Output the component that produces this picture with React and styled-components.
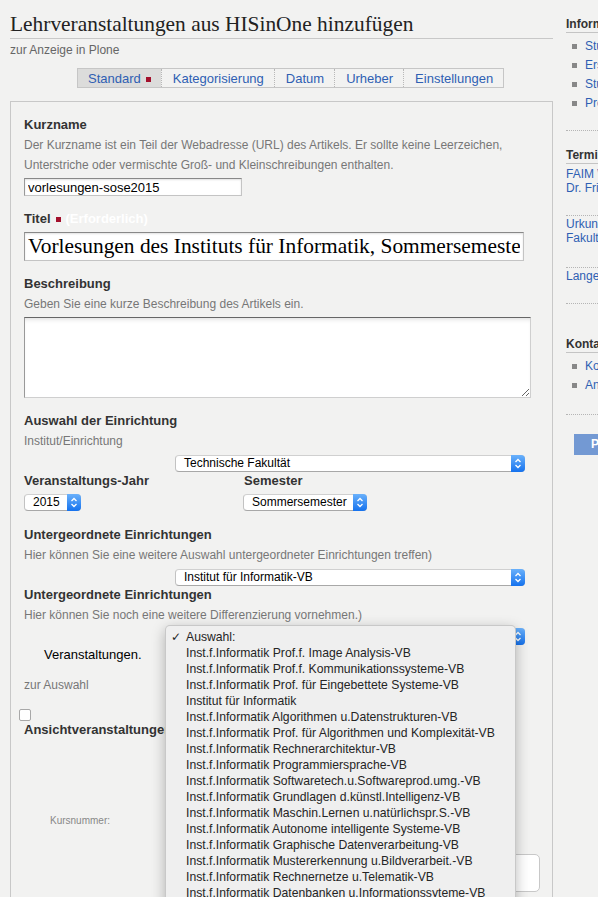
import React from 'react';
import styled, { createGlobalStyle } from 'styled-components';

const GlobalStyle = createGlobalStyle`
  html, body {
    margin: 0;
    padding: 0;
    background: #f2f2f1;
    overflow: hidden;
    font-family: "Liberation Sans", Arial, sans-serif;
  }
`;

const Page = styled.div`
  display: flex;
  align-items: flex-start;
  width: 820px;
  padding-left: 10px;
`;

const Main = styled.div`
  width: 543px;
  flex: none;
`;

const Title = styled.h1`
  margin: 0;
  padding: 11px 0 1px;
  font-family: "Liberation Serif", "Times New Roman", serif;
  font-weight: normal;
  font-size: 21.4px;
  line-height: 26px;
  color: #222;
  border-bottom: 1px solid #c8c8c8;
`;

const Subtitle = styled.div`
  margin-top: 3px;
  font-size: 12px;
  line-height: 16px;
  color: #666;
`;

const Tabs = styled.div`
  display: flex;
  margin: 10px 0 0 67px;
  width: fit-content;
  border: 1px solid #c6c6c6;
  background: #f2f2f1;
`;

const Tab = styled.div`
  display: flex;
  align-items: center;
  padding: 1px 10px 0 ${p => (p.$first ? '10px' : '11px')};
  font-size: 13px;
  line-height: 17px;
  color: #2f5fb3;
  background: ${p => (p.$active ? '#dcdcdb' : 'transparent')};
  border-left: ${p => (p.$first ? 'none' : '1px dotted #b8b8b8')};
`;

const Required = styled.span`
  display: inline-block;
  width: 5px;
  height: 5px;
  margin-left: 5px;
  background: #a3102c;
  position: relative;
  top: ${p => p.$top || '1px'};
`;

const Fieldset = styled.div`
  margin-top: 13px;
  border: 1px solid #c8c8c8;
  border-bottom: none;
  padding: 14px 20px 0 13px;
  height: 820px;
`;

const Field = styled.div`
  margin-top: ${p => p.$mt || '14px'};
`;

const Label = styled.div`
  font-size: 13px;
  line-height: 18px;
  font-weight: bold;
  color: #333;
  white-space: nowrap;
`;

const Muted = styled.span`
  color: #fff;
  font-weight: bold;
  margin-left: 5px;
`;

const Help = styled.div`
  margin-top: 1px;
  font-size: 12px;
  line-height: 20px;
  color: #777;
  white-space: nowrap;
`;

const TextInput = styled.input`
  display: block;
  box-sizing: border-box;
  margin-top: ${p => p.$mt || '3px'};
  width: ${p => p.$w};
  height: ${p => p.$h};
  padding: 0 3px;
  border: 1px solid #c4c4c4;
  border-top-color: #888;
  border-left-color: #999;
  background: #fff;
  box-shadow: inset 0 1px 2px rgba(0, 0, 0, 0.12);
  font-family: ${p => (p.$serif ? '"Liberation Serif", "Times New Roman", serif' : '"Liberation Sans", Arial, sans-serif')};
  font-size: ${p => p.$fs};
  color: #000;
  outline: none;
`;

const TextArea = styled.textarea`
  display: block;
  box-sizing: border-box;
  margin-top: 3px;
  width: 507px;
  height: 81px;
  border: 1px solid #cfcfcf;
  border-top-color: #666;
  border-left-color: #999;
  background: #fff;
  box-shadow: inset 0 4px 5px -3px rgba(0, 0, 0, 0.15);
  outline: none;
`;

const SelectBox = styled.div`
  position: relative;
  display: flex;
  box-sizing: border-box;
  margin-top: ${p => p.$mt || '3px'};
  margin-left: ${p => p.$ml || '0'};
  width: ${p => p.$w};
  height: 17px;
  border: 1px solid #c2c2c2;
  border-top-color: #d0d0d0;
  border-bottom-color: #a8a8a8;
  border-radius: 4px;
  background: #fff;
`;

const SelectText = styled.div`
  flex: 1;
  padding-left: 8px;
  font-size: 12px;
  line-height: 15px;
  color: #000;
  white-space: nowrap;
  overflow: hidden;
`;

const SelectArrow = styled.div`
  display: flex;
  align-items: center;
  justify-content: center;
  width: 14px;
  margin: -1px -1px -1px 0;
  border-radius: 0 4px 4px 0;
  background: linear-gradient(#6ab1fb, #1572ee);
`;

const Row = styled.div`
  display: grid;
  grid-template-columns: 220px 1fr;
`;

const Plain = styled.div`
  margin: 2px 0 0 20px;
  font-size: 13px;
  line-height: 16px;
  color: #000;
`;

const Note = styled.div`
  margin-top: 14px;
  font-size: 12px;
  line-height: 16px;
  color: #777;
`;

const Check = styled.div`
  margin: 16px 0 0 -5px;
  width: 12px;
  height: 12px;
  box-sizing: border-box;
  border: 1px solid #a8a8a8;
  border-radius: 2px;
  background: #fff;
`;

const Small = styled.div`
  margin: 76px 0 0 26px;
  font-size: 10px;
  line-height: 12px;
  color: #888;
`;

const CourseBox = styled.div`
  margin: 27px 0 0 396px;
  width: 118px;
  height: 36px;
  border: 1px solid #c8c8c8;
  border-radius: 5px;
  background: #fff;
`;

const DetailLink = styled.div`
  margin-top: 2px;
  font-size: 13px;
  font-weight: bold;
  line-height: 18px;
  color: #2f5fb3;
`;

const MenuAnchor = styled.div`
  position: relative;
`;

const Menu = styled.div`
  position: absolute;
  z-index: 10;
  top: -3px;
  left: 141px;
  width: 351px;
  box-sizing: border-box;
  padding-top: 3px;
  background: #efefef;
  border: 1px solid rgba(0, 0, 0, 0.16);
  border-radius: 5px;
  box-shadow: 0 4px 14px rgba(0, 0, 0, 0.28);
`;

const MenuItem = styled.div`
  position: relative;
  padding-left: 20px;
  font-size: 12.2px;
  line-height: 16px;
  color: #252525;
  white-space: nowrap;
`;

const Tick = styled.span`
  position: absolute;
  left: 5px;
  top: 0;
  font-family: "DejaVu Sans", sans-serif;
  font-size: 12px;
  font-weight: bold;
  color: #222;
`;

const Sidebar = styled.div`
  width: 220px;
  flex: none;
  margin-left: 13px;
  font-size: 12px;
  white-space: nowrap;
`;

const Portlet = styled.div`
  padding-top: ${p => p.$pt};
  padding-bottom: ${p => p.$pb};
  border-bottom: 1px dotted #b5b5b5;
`;

const PortletHead = styled.div`
  font-weight: bold;
  line-height: 15px;
  color: #333;
  border-bottom: 1px solid #c4c4c4;
`;

const Bullets = styled.ul`
  list-style: none;
  margin: ${p => p.$mt} 0 0;
  padding: 0;
`;

const Bullet = styled.li`
  display: flex;
  align-items: center;
  line-height: 19px;
  color: #2f5fb3;

  &::before {
    content: '';
    width: 5px;
    height: 5px;
    margin: 0 8px 0 6px;
    background: #888;
  }
`;

const Lines = styled.div`
  margin-top: ${p => p.$mt || '0'};
  line-height: 14px;
  color: #2f5fb3;
`;

const SideButton = styled.div`
  margin: 19px 0 0 8px;
  width: 110px;
  height: 21px;
  padding-left: 17px;
  box-sizing: border-box;
  background: #7399d3;
  color: #fff;
  font-weight: bold;
  line-height: 21px;
`;

const Arrows = () => (
  <svg width="8" height="11" viewBox="0 0 8 11">
    <path d="M1.5 4 L4 1.5 L6.5 4 M1.5 7 L4 9.5 L6.5 7" fill="none" stroke="#fff" strokeWidth="1.3" />
  </svg>
);

const Select = ({ width, ml, mt, children }) => (
  <SelectBox $w={width} $ml={ml} $mt={mt}>
    <SelectText>{children}</SelectText>
    <SelectArrow>
      <Arrows />
    </SelectArrow>
  </SelectBox>
);

const options = [
  'Inst.f.Informatik Prof.f. Image Analysis-VB',
  'Inst.f.Informatik Prof.f. Kommunikationssysteme-VB',
  'Inst.f.Informatik Prof. für Eingebettete Systeme-VB',
  'Institut für Informatik',
  'Inst.f.Informatik Algorithmen u.Datenstrukturen-VB',
  'Inst.f.Informatik Prof. für Algorithmen und Komplexität-VB',
  'Inst.f.Informatik Rechnerarchitektur-VB',
  'Inst.f.Informatik Programmiersprache-VB',
  'Inst.f.Informatik Softwaretech.u.Softwareprod.umg.-VB',
  'Inst.f.Informatik Grundlagen d.künstl.Intelligenz-VB',
  'Inst.f.Informatik Maschin.Lernen u.natürlichspr.S.-VB',
  'Inst.f.Informatik Autonome intelligente Systeme-VB',
  'Inst.f.Informatik Graphische Datenverarbeitung-VB',
  'Inst.f.Informatik Mustererkennung u.Bildverarbeit.-VB',
  'Inst.f.Informatik Rechnernetze u.Telematik-VB',
  'Inst.f.Informatik Datenbanken u.Informationssyteme-VB',
  'Inst.f.Informatik Bioinformatik-VB',
];

export default function App() {
  return (
    <>
      <GlobalStyle />
      <Page>
        <Main>
          <Title>Lehrveranstaltungen aus HISinOne hinzufügen</Title>
          <Subtitle>zur Anzeige in Plone</Subtitle>
          <Tabs>
            <Tab $first $active>Standard<Required /></Tab>
            <Tab>Kategorisierung</Tab>
            <Tab>Datum</Tab>
            <Tab>Urheber</Tab>
            <Tab>Einstellungen</Tab>
          </Tabs>

          <Fieldset>
            <Field $mt="0">
              <Label>Kurzname</Label>
              <Help>
                Der Kurzname ist ein Teil der Webadresse (URL) des Artikels. Er sollte keine Leerzeichen,
                <br />
                Unterstriche oder vermischte Groß- und Kleinschreibungen enthalten.
              </Help>
              <TextInput $w="218px" $h="18px" $fs="13px" defaultValue="vorlesungen-sose2015" />
            </Field>

            <Field>
              <Label>Titel<Required $top="-1px" /><Muted>(Erforderlich)</Muted></Label>
              <TextInput
                $w="500px"
                $h="29px"
                $fs="21.4px"
                $mt="4px"
                $serif
                defaultValue="Vorlesungen des Instituts für Informatik, Sommersemester 2015"
              />
            </Field>

            <Field>
              <Label>Beschreibung</Label>
              <Help>Geben Sie eine kurze Beschreibung des Artikels ein.</Help>
              <TextArea />
            </Field>

            <Field>
              <Label>Auswahl der Einrichtung</Label>
              <Help>Institut/Einrichtung</Help>
              <Select width="350px" ml="151px" mt="4px">Technische Fakultät</Select>
            </Field>

            <Row>
              <div>
                <Label>Veranstaltungs-Jahr</Label>
                <Select width="57px" mt="4px">2015</Select>
              </div>
              <div>
                <Label>Semester</Label>
                <Select width="124px" ml="-1px" mt="4px">Sommersemester</Select>
              </div>
            </Row>

            <Field $mt="15px">
              <Label>Untergeordnete Einrichtungen</Label>
              <Help>Hier können Sie eine weitere Auswahl untergeordneter Einrichtungen treffen)</Help>
              <Select width="350px" ml="151px" mt="4px">Institut für Informatik-VB</Select>
            </Field>

            <Field $mt="0">
              <Label>Untergeordnete Einrichtungen</Label>
              <Help>Hier können Sie noch eine weitere Differenzierung vornehmen.)</Help>
              <MenuAnchor>
                <Select width="350px" ml="151px" mt="3px" />
                <Menu>
                  <MenuItem><Tick>✓</Tick>Auswahl:</MenuItem>
                  {options.map(o => (
                    <MenuItem key={o}>{o}</MenuItem>
                  ))}
                </Menu>
              </MenuAnchor>
            </Field>

            <Plain>Veranstaltungen.</Plain>
            <Note>zur Auswahl</Note>
            <Check />
            <Label>Ansichtveranstaltungen</Label>
            <Small>Kursnummer:</Small>
            <CourseBox />
            <DetailLink>Details</DetailLink>
          </Fieldset>
        </Main>

        <Sidebar>
          <Portlet $pt="16.7px" $pb="17px">
            <PortletHead>Informationen</PortletHead>
            <Bullets $mt="4.6px">
              <Bullet>Studium</Bullet>
              <Bullet>Erstsemester</Bullet>
              <Bullet>Studienberatung</Bullet>
              <Bullet>Promotion</Bullet>
            </Bullets>
          </Portlet>
          <Portlet $pt="17px" $pb="20px">
            <PortletHead>Termine</PortletHead>
            <Lines $mt="2.5px">
              FAIM Workshop 2015
              <br />
              Dr. Fritz Vortrag
            </Lines>
          </Portlet>
          <Portlet $pt="1px" $pb="22px">
            <Lines>
              Urkundenübergabe der
              <br />
              Fakultät
            </Lines>
          </Portlet>
          <Portlet $pt="1px" $pb="20px">
            <Lines>Lange Nacht der Wissenschaft</Lines>
          </Portlet>
          <Portlet $pt="33.6px" $pb="19px">
            <PortletHead>Kontakt</PortletHead>
            <Bullets $mt="3.7px">
              <Bullet>Kontaktformular</Bullet>
              <Bullet>Anfahrt</Bullet>
            </Bullets>
          </Portlet>
          <SideButton>Plone</SideButton>
        </Sidebar>
      </Page>
    </>
  );
}
